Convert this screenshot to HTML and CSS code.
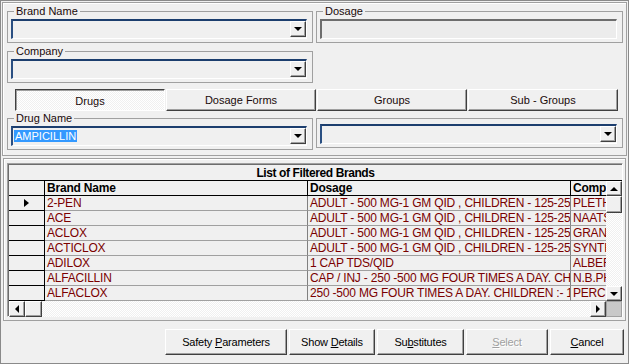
FILE: index.html
```html
<!DOCTYPE html>
<html lang="en">
<head>
  <meta charset="UTF-8" />
  <title>Brand Search</title>
  <link rel="stylesheet" href="styles.css">
</head>
<body>
  <div class="window">
    <div class="panel top-panel">
      <div class="row">
        <fieldset class="group left">
          <legend>Brand Name</legend>
          <div class="combo"><span class="combo-text"></span><span class="drop"><i class="tri-down"></i></span></div>
        </fieldset>
        <fieldset class="group right">
          <legend>Dosage</legend>
          <div class="textbox"></div>
        </fieldset>
      </div>

      <div class="row company-row">
        <fieldset class="group left">
          <legend>Company</legend>
          <div class="combo"><span class="combo-text"></span><span class="drop"><i class="tri-down"></i></span></div>
        </fieldset>
      </div>

      <div class="tabs">
        <div class="tab pressed">Drugs</div>
        <div class="tab">Dosage Forms</div>
        <div class="tab">Groups</div>
        <div class="tab">Sub - Groups</div>
      </div>

      <div class="row drug-row">
        <fieldset class="group left">
          <legend>Drug Name</legend>
          <div class="combo"><span class="combo-text"><span class="selected">AMPICILLIN</span></span><span class="drop"><i class="tri-down"></i></span></div>
        </fieldset>
        <fieldset class="group right no-legend">
          <div class="combo"><span class="combo-text"></span><span class="drop"><i class="tri-down"></i></span></div>
        </fieldset>
      </div>
    </div>

    <div class="panel grid-panel">
      <div class="grid">
        <div class="grid-title">List of Filtered Brands</div>
        <div class="grid-body">
          <div class="grid-view">
            <div class="cells">
              <div class="cell ind head"></div>
              <div class="cell head">Brand Name</div>
              <div class="cell head">Dosage</div>
              <div class="cell head">Comp.</div>

              <div class="cell ind"><i class="tri-right"></i></div>
              <div class="cell">2-PEN</div>
              <div class="cell">ADULT - 500 MG-1 GM QID , CHILDREN - 125-250 MG</div>
              <div class="cell">PLETHICO</div>

              <div class="cell ind"></div>
              <div class="cell">ACE</div>
              <div class="cell">ADULT - 500 MG-1 GM QID , CHILDREN - 125-250 MG</div>
              <div class="cell">NAATSUN</div>

              <div class="cell ind"></div>
              <div class="cell">ACLOX</div>
              <div class="cell">ADULT - 500 MG-1 GM QID , CHILDREN - 125-250 MG</div>
              <div class="cell">GRANITE</div>

              <div class="cell ind"></div>
              <div class="cell">ACTICLOX</div>
              <div class="cell">ADULT - 500 MG-1 GM QID , CHILDREN - 125-250 MG</div>
              <div class="cell">SYNTHO</div>

              <div class="cell ind"></div>
              <div class="cell">ADILOX</div>
              <div class="cell">1 CAP TDS/QID</div>
              <div class="cell">ALBERT</div>

              <div class="cell ind"></div>
              <div class="cell">ALFACILLIN</div>
              <div class="cell">CAP / INJ - 250 -500 MG FOUR TIMES A DAY. CHILDREN</div>
              <div class="cell">N.B.PHARMA</div>

              <div class="cell ind"></div>
              <div class="cell">ALFACLOX</div>
              <div class="cell">250 -500 MG FOUR TIMES A DAY. CHILDREN :- 1</div>
              <div class="cell">PERCH</div>
            </div>
          </div>
          <div class="vscroll">
            <span class="sbtn"><i class="tri-up"></i></span>
            <span class="thumb v"></span>
            <span class="track"></span>
            <span class="sbtn"><i class="tri-down"></i></span>
          </div>
        </div>
        <div class="hscroll">
          <span class="sbtn"><i class="tri-left"></i></span>
          <span class="thumb h"></span>
          <span class="track"></span>
          <span class="sbtn"><i class="tri-right"></i></span>
          <span class="corner"></span>
        </div>
      </div>
    </div>

    <div class="actions">
      <button class="btn w-safety">Safety <u>P</u>arameters</button>
      <button class="btn w-details">Show <u>D</u>etails</button>
      <button class="btn w-subs">Su<u>b</u>stitutes</button>
      <button class="btn w-select" disabled><u>S</u>elect</button>
      <button class="btn w-cancel"><u>C</u>ancel</button>
    </div>
  </div>
</body>
</html>
```

FILE: styles.css
```css
* {
  box-sizing: border-box;
}

body {
  margin: 0;
  background: #f0f0f0;
  font-family: "Liberation Sans", Arial, sans-serif;
  font-size: 11px;
  color: #1a0a0a;
}

.window {
  width: 629px;
  height: 364px;
  border: 1px solid #8a8a8a;
  padding: 1px;
  display: flex;
  flex-direction: column;
}

.panel {
  border: 1px solid #a0a0a0;
  box-shadow: inset 1px 1px #fff;
}

.top-panel {
  height: 154px;
  padding: 2px 3px 0 4px;
}

.row {
  display: flex;
  gap: 3px;
  align-items: flex-start;
}

.company-row {
  margin-top: 2px;
}

.drug-row {
  margin-top: 1px;
}

/* group boxes */
.group {
  margin: 0;
  min-width: 0;
  border: 1px solid #a0a0a0;
  padding: 1px 5px 3px 3px;
}

.group.left {
  width: 306px;
}

.group.right {
  width: 307px;
}

.group legend {
  margin-left: 3px;
  padding: 0 2px;
  line-height: 13px;
}

.group.no-legend {
  margin-top: 6px;
  padding-top: 5px;
}

.combo {
  height: 20px;
  display: flex;
  border-style: solid;
  border-width: 2px 1px 1px 2px;
  border-color: #1c3e6e #fff #fff #2a4f82;
}

.combo-text {
  flex: 1;
  padding: 2px 1px;
  line-height: 13px;
}

.selected {
  background: #3399ff;
  color: #fff;
  padding: 0 1px;
}

.drop {
  width: 16px;
  height: 16px;
  display: flex;
  align-items: center;
  justify-content: center;
  border: 1px solid;
  border-color: #fff #404040 #404040 #fff;
  box-shadow: inset -1px -1px #a0a0a0;
  background: #f0f0f0;
}

.textbox {
  height: 20px;
  border-style: solid;
  border-width: 2px 1px 1px 2px;
  border-color: #6d6d6d #fff #fff #6d6d6d;
  background: #ececec;
}

/* arrows */
.tri-down,
.tri-up,
.tri-left,
.tri-right {
  display: block;
  width: 0;
  height: 0;
  border: 0 solid transparent;
}

.tri-down {
  border-width: 4px 4px 0;
  border-top-color: #000;
}

.tri-up {
  border-width: 0 4px 4px;
  border-bottom-color: #000;
}

.tri-left {
  border-width: 4px 4px 4px 0;
  border-right-color: #000;
}

.tri-right {
  border-width: 4px 0 4px 4px;
  border-left-color: #000;
}

/* tabs */
.tabs {
  display: flex;
  gap: 1px;
  margin: 6px 0 0 8px;
}

.tab {
  width: 150px;
  height: 22px;
  line-height: 20px;
  text-align: center;
  border: 1px solid;
  border-color: #fff #404040 #404040 #fff;
  box-shadow: inset -1px -1px #a0a0a0;
}

.tab.pressed {
  border-color: #404040 #fff #fff #404040;
  box-shadow: inset 1px 1px #a0a0a0;
  background: conic-gradient(#fff 25%, #f0f0f0 0 50%, #fff 0 75%, #f0f0f0 0) 0 0 / 2px 2px;
  line-height: 22px;
}

/* grid */
.grid-panel {
  height: 163px;
  margin: 2px 1px 0;
  padding: 4px 3px 0 3px;
}

.grid {
  width: 616px;
  height: 154px;
  border: 1px solid;
  border-color: #a0a0a0 #fff #fff #a0a0a0;
  box-shadow: inset 1px 1px #6d6d6d;
  padding: 1px 0 0 1px;
  display: flex;
  flex-direction: column;
  color: #7a0000;
  font-size: 12px;
}

.grid-title {
  height: 16px;
  line-height: 16px;
  text-align: center;
  font-weight: bold;
  color: #000;
  letter-spacing: -0.4px;
  border-bottom: 1px solid #000;
}

.grid-body {
  display: flex;
  height: 120px;
}

.grid-view {
  width: 598px;
  overflow: hidden;
}

.cells {
  display: grid;
  grid-template-columns: 36px 263px 263px 36px;
  grid-auto-rows: 15px;
}

.cell {
  border-right: 1px solid #808080;
  border-bottom: 1px solid #a0a0a0;
  padding-left: 2px;
  line-height: 14px;
  white-space: nowrap;
  overflow: hidden;
  letter-spacing: -0.2px;
}

.cells .cell:nth-child(4n) {
  border-right: 0;
}

.cell.head {
  font-weight: bold;
  color: #000;
  letter-spacing: -0.2px;
  border-bottom-color: #000;
  border-right-color: #000;
}

.cell.ind {
  border-right-color: #000;
  border-bottom-color: #000;
  display: flex;
  align-items: center;
  justify-content: center;
  padding-left: 0;
}

.cell.ind .tri-right {
  border-width: 4px 0 4px 5px;
}

/* scrollbars */
.vscroll {
  width: 16px;
  display: flex;
  flex-direction: column;
}

.hscroll {
  height: 16px;
  display: flex;
}

.sbtn,
.thumb {
  width: 16px;
  height: 15px;
  display: flex;
  align-items: center;
  justify-content: center;
  border: 1px solid;
  border-color: #fff #404040 #404040 #fff;
  box-shadow: inset -1px -1px #a0a0a0;
  background: #f0f0f0;
}

.hscroll .sbtn {
  height: 16px;
}

.thumb.v {
  height: 17px;
}

.thumb.h {
  width: 17px;
  height: 16px;
}

.track {
  flex: 1;
  background: conic-gradient(#fff 25%, #f0f0f0 0 50%, #fff 0 75%, #f0f0f0 0) 0 0 / 2px 2px;
}

.corner {
  width: 16px;
  background: #c8c8c8;
  border: 1px solid #a0a0a0;
}

/* buttons */
.actions {
  display: flex;
  justify-content: flex-end;
  gap: 2px;
  padding: 8px 3px 0 0;
}

.btn {
  height: 26px;
  font: 11px "Liberation Sans", Arial, sans-serif;
  color: #000;
  letter-spacing: -0.2px;
  background: #f0f0f0;
  border: 1px solid;
  border-color: #fff #404040 #404040 #fff;
  box-shadow: inset -1px -1px #a0a0a0;
  padding: 0;
}

.btn:disabled {
  color: #a0a0a0;
  text-shadow: 1px 1px #fff;
}

.w-safety { width: 122px; }
.w-details { width: 86px; }
.w-subs { width: 87px; }
.w-select { width: 82px; }
.w-cancel { width: 74px; }
```
